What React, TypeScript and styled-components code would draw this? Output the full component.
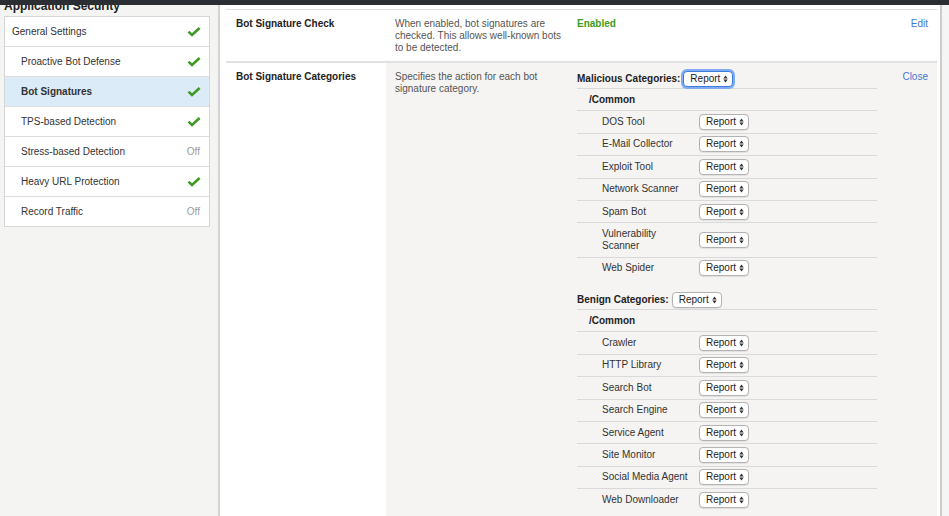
import React from "react";
import styled, { createGlobalStyle } from "styled-components";

const GlobalStyle = createGlobalStyle`
  html, body { margin: 0; padding: 0; }
  body {
    font-family: "Liberation Sans", Arial, Helvetica, sans-serif;
    font-size: 10px;
    color: #333;
    background: #fff;
  }
  * { box-sizing: border-box; }
`;

const TopBar = styled.div`
  position: fixed;
  top: 0;
  left: 0;
  right: 0;
  height: 5px;
  background: #2b2f33;
  z-index: 10;
`;

const Page = styled.div`
  display: flex;
  min-height: 100vh;
`;

const Sidebar = styled.aside`
  flex: 0 0 220px;
  background: #f4f4f2;
  border-right: 2px solid #d3d3d3;
  padding: 0 8px 0 4px;
`;

const SideTitle = styled.h2`
  margin: 0 0 4px;
  font-size: 12px;
  line-height: 12px;
  font-weight: bold;
  color: #222;
`;

const NavList = styled.ul`
  list-style: none;
  margin: 0;
  padding: 0;
  background: #fff;
  border: 1px solid #d6d6d6;
`;

const NavItem = styled.li<{ $sub?: boolean; $active?: boolean }>`
  display: flex;
  align-items: center;
  justify-content: space-between;
  height: 30px;
  padding: 0 8px 0 ${(p) => (p.$sub ? "16px" : "7px")};
  border-top: 1px solid #dcdcdc;
  background: ${(p) => (p.$active ? "#dcebf8" : "#fff")};
  font-weight: ${(p) => (p.$active ? "bold" : "normal")};
  color: #333;
  &:first-child {
    border-top: none;
    height: 29px;
  }
`;

const OffText = styled.span`
  color: #9a9a9a;
  margin-right: 1px;
`;

const Content = styled.main`
  flex: 1;
  padding: 9px 3px 0 6px;
  background: #fff;
`;

const Gutter = styled.div`
  flex: 0 0 9px;
  border-left: 2px solid #cdcdcd;
  background: #f5f5f5;
`;

const Panel = styled.div`
  display: flex;
  flex-direction: column;
  min-height: calc(100vh - 9px);
  border-top: 1px solid #dedede;
`;

const SettingRow = styled.div<{ $divider?: boolean; $grow?: boolean; $shaded?: boolean }>`
  display: grid;
  grid-template-columns: 160px 191px 300px 1fr;
  border-bottom: ${(p) => (p.$divider ? "2px solid #e1e1e1" : "none")};
  flex: ${(p) => (p.$grow ? "1" : "none")};
  background: ${(p) => (p.$shaded ? "#f5f4f2" : "#fff")};
  line-height: 12px;
`;

const LabelCell = styled.div`
  background: #fff;
  padding: 8px 10px;
  font-weight: bold;
  color: #222;
`;

const DescCell = styled.div`
  padding: 8px 6px 7px 9px;
  color: #555;
`;

const ValueCell = styled.div`
  padding: 8px 0 20px;
`;

const ActionCell = styled.div`
  padding: 8px 9px 0 0;
  text-align: right;
`;

const EnabledText = styled.span`
  color: #3d9b22;
  font-weight: bold;
`;

const LinkText = styled.a`
  color: #3f78d4;
  text-decoration: none;
  cursor: pointer;
`;

const Section = styled.section`
  & + & {
    margin-top: 13px;
  }
`;

const SectionHeader = styled.div`
  display: flex;
  align-items: center;
  height: 16px;
  margin-bottom: 1px;
  font-weight: bold;
  color: #222;
  gap: 3px;
`;

const GroupRow = styled.div`
  border-top: 1px solid #d9d9d9;
  padding: 4.7px 12px;
  font-weight: bold;
  color: #222;
`;

const CatRow = styled.div`
  display: grid;
  grid-template-columns: 122px auto;
  align-items: center;
  border-top: 1px solid #d9d9d9;
`;

const CatName = styled.div`
  padding: 4.7px 0 4.7px 25px;
  color: #333;
`;

const SelectButton = styled.button<{ $focused?: boolean }>`
  display: inline-flex;
  align-items: center;
  justify-content: space-between;
  width: 50px;
  height: 16px;
  padding: 0 4px 0 6px;
  margin: 0;
  font-family: inherit;
  font-size: 10px;
  line-height: 12px;
  color: #222;
  background: #fff;
  border: 1px solid ${(p) => (p.$focused ? "#3b7bdf" : "#b3b3b3")};
  border-radius: 4px;
  box-shadow: ${(p) =>
    p.$focused ? "0 0 0 2px #80abf0" : "0 0.5px 1px rgba(0,0,0,0.08)"};
  cursor: pointer;
`;

const CheckIcon = () => (
  <svg width="14" height="10" viewBox="0 0 14 10" aria-hidden="true">
    <polyline
      points="1.5,4.6 5,8 12.6,1"
      fill="none"
      stroke="#3f9a27"
      strokeWidth="2.6"
      strokeLinecap="butt"
      strokeLinejoin="miter"
    />
  </svg>
);

const UpDownIcon = () => (
  <svg width="5" height="8" viewBox="0 0 5 8" aria-hidden="true">
    <path d="M0.3 3.4 L2.5 0.4 L4.7 3.4 Z M0.3 4.6 L2.5 7.6 L4.7 4.6 Z" fill="#333" />
  </svg>
);

const Select = ({ focused }: { focused?: boolean }) => (
  <SelectButton type="button" $focused={focused}>
    <span>Report</span>
    <UpDownIcon />
  </SelectButton>
);

type Nav = { label: string; sub?: boolean; active?: boolean; on: boolean };

const navItems: Nav[] = [
  { label: "General Settings", on: true },
  { label: "Proactive Bot Defense", sub: true, on: true },
  { label: "Bot Signatures", sub: true, active: true, on: true },
  { label: "TPS-based Detection", sub: true, on: true },
  { label: "Stress-based Detection", sub: true, on: false },
  { label: "Heavy URL Protection", sub: true, on: true },
  { label: "Record Traffic", sub: true, on: false },
];

const malicious: string[][] = [
  ["DOS Tool"],
  ["E-Mail Collector"],
  ["Exploit Tool"],
  ["Network Scanner"],
  ["Spam Bot"],
  ["Vulnerability", "Scanner"],
  ["Web Spider"],
];

const benign: string[][] = [
  ["Crawler"],
  ["HTTP Library"],
  ["Search Bot"],
  ["Search Engine"],
  ["Service Agent"],
  ["Site Monitor"],
  ["Social Media Agent"],
  ["Web Downloader"],
];

const CategorySection = ({
  title,
  rows,
  focused,
}: {
  title: string;
  rows: string[][];
  focused?: boolean;
}) => (
  <Section>
    <SectionHeader>
      <span>{title}</span>
      <Select focused={focused} />
    </SectionHeader>
    <GroupRow>/Common</GroupRow>
    {rows.map((lines) => (
      <CatRow key={lines.join(" ")}>
        <CatName>
          {lines.map((l, i) => (
            <React.Fragment key={l}>
              {i > 0 && <br />}
              {l}
            </React.Fragment>
          ))}
        </CatName>
        <div>
          <Select />
        </div>
      </CatRow>
    ))}
  </Section>
);

export default function App() {
  return (
    <>
      <GlobalStyle />
      <TopBar />
      <Page>
        <Sidebar>
          <SideTitle>Application Security</SideTitle>
          <NavList>
            {navItems.map((n) => (
              <NavItem key={n.label} $sub={n.sub} $active={n.active}>
                <span>{n.label}</span>
                {n.on ? <CheckIcon /> : <OffText>Off</OffText>}
              </NavItem>
            ))}
          </NavList>
        </Sidebar>
        <Content>
          <Panel>
            <SettingRow $divider>
              <LabelCell>Bot Signature Check</LabelCell>
              <DescCell>
                When enabled, bot signatures are checked. This allows well-known bots to be
                detected.
              </DescCell>
              <ValueCell>
                <EnabledText>Enabled</EnabledText>
              </ValueCell>
              <ActionCell>
                <LinkText>Edit</LinkText>
              </ActionCell>
            </SettingRow>
            <SettingRow $grow $shaded>
              <LabelCell>Bot Signature Categories</LabelCell>
              <DescCell>Specifies the action for each bot signature category.</DescCell>
              <ValueCell>
                <CategorySection title="Malicious Categories:" rows={malicious} focused />
                <CategorySection title="Benign Categories:" rows={benign} />
              </ValueCell>
              <ActionCell>
                <LinkText>Close</LinkText>
              </ActionCell>
            </SettingRow>
          </Panel>
        </Content>
        <Gutter />
      </Page>
    </>
  );
}
